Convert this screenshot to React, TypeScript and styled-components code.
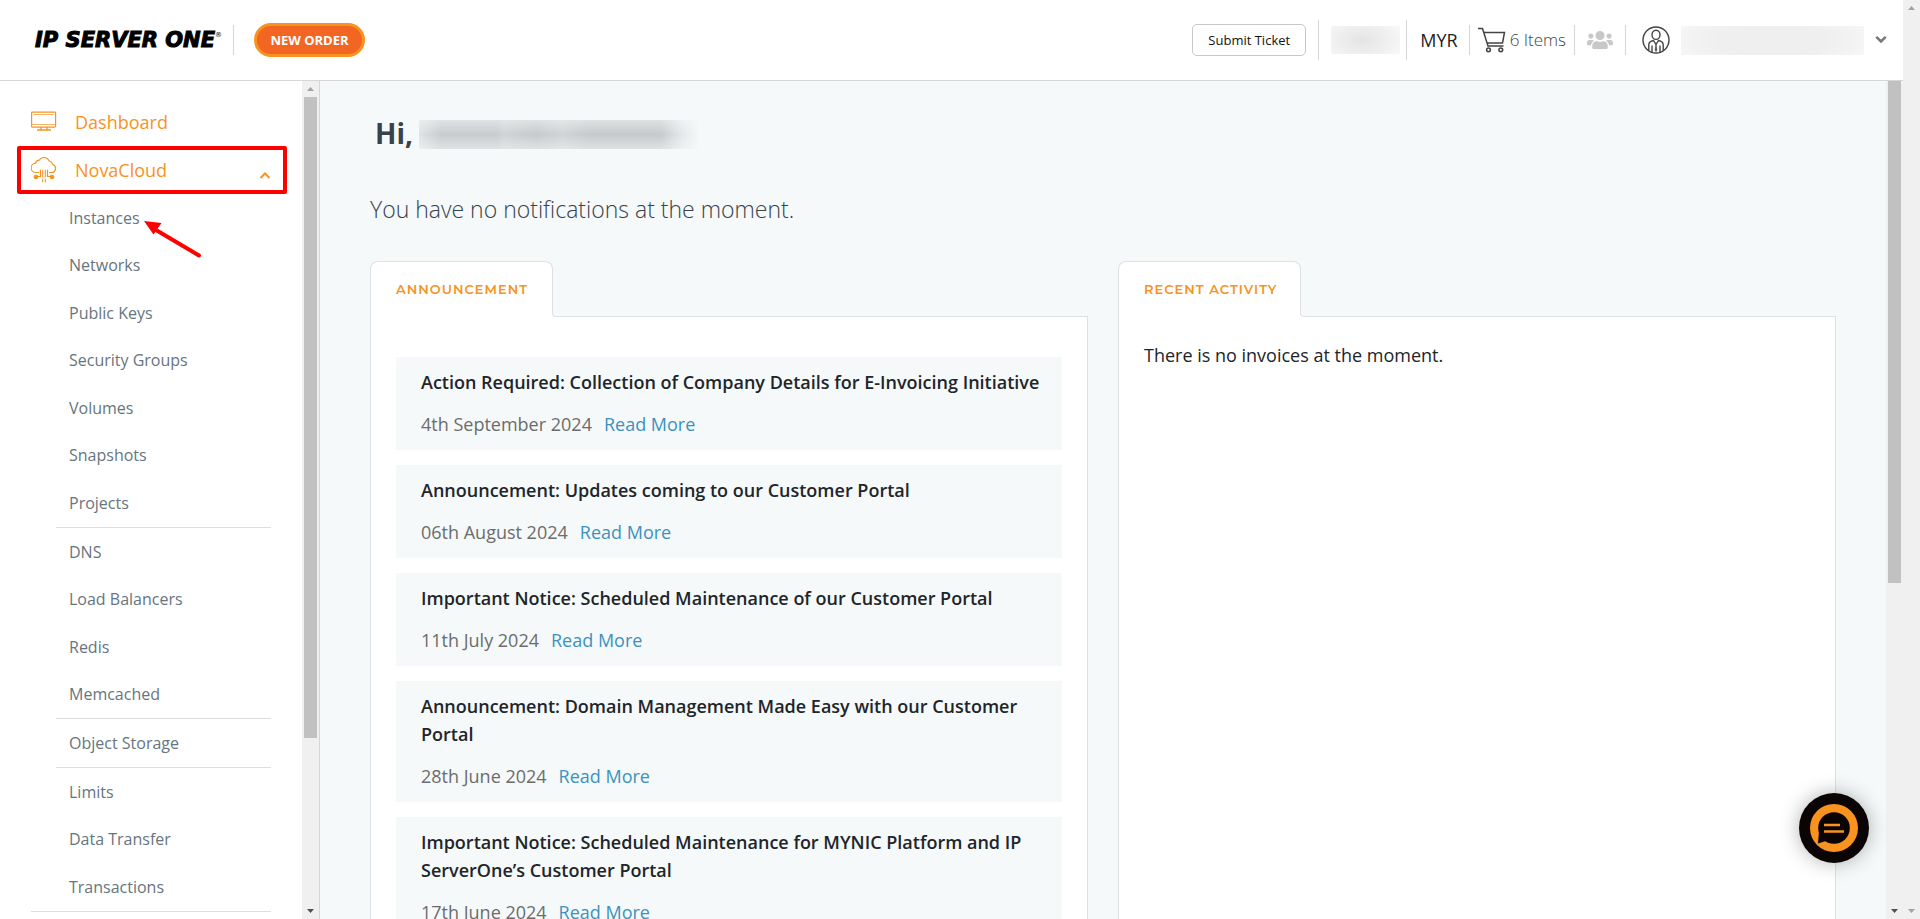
import React from 'react';
import styled, { createGlobalStyle, css } from 'styled-components';
import { FaUsers } from 'react-icons/fa';

const color = {
  line: '#d6d6d6',
  panelLine: '#dde1e6',
  orange: '#f7931e',
  pale: '#f5f9fa',
  muted: '#667580',
};

const GlobalStyle = createGlobalStyle`
  *, *::before, *::after { box-sizing: border-box; }
  body {
    margin: 0;
    background: #fff;
    color: #212529;
    font-family: "Open Sans", "Noto Sans", sans-serif;
    font-size: 18px;
    line-height: 28px;
  }
  ul { list-style: none; margin: 0; padding: 0; }
  a { text-decoration: none; color: inherit; }
  h1, h2, h3, p { margin: 0; }
  button { font-family: inherit; cursor: pointer; }
`;

const Window = styled.div`
  display: flex;
  height: 100vh;
  overflow: hidden;
`;

const Page = styled.div`
  flex: 1;
  min-width: 0;
  display: flex;
  flex-direction: column;
`;

const Body = styled.div`
  flex: 1;
  min-height: 0;
  display: flex;
`;

/* ---------- scroll rails ---------- */

const Rail = styled.div`
  flex: none;
  width: 17px;
  display: flex;
  flex-direction: column;
  align-items: center;
  background: #f0f0f0;
`;

const RailEnd = styled.span<{ $dim?: boolean }>`
  flex: none;
  height: 16px;
  display: flex;
  align-items: center;
  color: ${(p) => (p.$dim ? '#a3a3a3' : '#505050')};
`;

const RailTrack = styled.div`
  flex: 1;
  align-self: stretch;
  padding: 0 2px;
`;

const RailThumb = styled.div`
  background: #c1c1c1;
`;

type RailProps = { up?: boolean; thumb?: number; dimDown?: boolean };

function ScrollRail({ up = true, thumb = 0, dimDown }: RailProps) {
  return (
    <Rail aria-hidden="true">
      {up && (
        <RailEnd $dim>
          <svg width="7" height="4" viewBox="0 0 7 4"><path d="M0 4 3.500 0 7 4Z" fill="currentColor" /></svg>
        </RailEnd>
      )}
      <RailTrack>
        <RailThumb style={{ height: `${thumb}%` }} />
      </RailTrack>
      <RailEnd $dim={dimDown}>
        <svg width="7" height="4" viewBox="0 0 7 4"><path d="M0 0 3.500 4 7 0Z" fill="currentColor" /></svg>
      </RailEnd>
    </Rail>
  );
}

/* ---------- header ---------- */

const Header = styled.header`
  flex: none;
  height: 81px;
  padding: 0 16px 0 35px;
  display: flex;
  align-items: center;
  justify-content: space-between;
  border-bottom: 1px solid ${color.line};
`;

const HeaderSide = styled.div`
  display: flex;
  align-items: center;
`;

const Logo = styled.a`
  display: flex;
  width: 198px;
  color: #000;
  font: italic 700 21px/32px "DejaVu Sans", sans-serif;
  -webkit-text-stroke: 1px #000;
  white-space: nowrap;

  sup {
    font: 400 7px/8px "DejaVu Sans", sans-serif;
    -webkit-text-stroke: 0;
    margin-top: 7px;
  }
`;

const Separator = styled.span<{ $tall?: boolean }>`
  width: 1px;
  height: ${(p) => (p.$tall ? '40px' : '30px')};
  background: ${color.line};
`;

const OrderButton = styled.button`
  margin-left: 20px;
  width: 111px;
  height: 34px;
  padding: 0;
  border: 3px solid ${color.orange};
  border-radius: 17px;
  background: #f26522;
  color: #fff;
  font-size: 13px;
  font-weight: 700;
`;

const TicketButton = styled.button`
  margin-right: 12px;
  width: 114px;
  height: 32px;
  padding: 0;
  border: 1px solid #c8c8c8;
  border-radius: 5px;
  background: #fff;
  color: #111;
  font-size: 13px;
`;

const Redacted = styled.span<{ $kind: 'balance' | 'account' | 'greeting' }>`
  display: block;
  ${(p) =>
    p.$kind === 'balance' &&
    css`
      width: 69px;
      height: 28px;
      margin: 0 6px 0 12px;
      background: radial-gradient(ellipse 65% 90% at 45% 50%, #e4e4e4, #f8f8f8);
    `}
  ${(p) =>
    p.$kind === 'account' &&
    css`
      width: 183px;
      height: 29px;
      margin-left: 11px;
      background: radial-gradient(ellipse 60% 110% at 50% 50%, #efefef 50%, #f7f7f7);
    `}
  ${(p) =>
    p.$kind === 'greeting' &&
    css`
      width: 281px;
      height: 29px;
      margin-top: 7px;
      background:
        linear-gradient(#f5f9fa80, #f5f9fa00 50%, #f5f9fa80),
        linear-gradient(90deg, #dfe3e5, #c8ccce 8%, #c8ccce 28%, #cfd3d5 30%, #c6cacc 42%, #d0d4d6 51%, #c6cacc 60%, #c6cacc 86%, #e6eaec 94%, #f5f9fa);
    `}
`;

const Currency = styled.a`
  padding: 0 11px 0 13px;
  color: #222;
`;

const CartLink = styled.a`
  display: flex;
  align-items: center;
  gap: 4px;
  padding: 0 8px;
  color: #444;
  font-size: 17px;
  font-weight: 300;
`;

const IconButton = styled.button<{ $wide?: boolean }>`
  display: flex;
  padding: 0;
  margin: ${(p) => (p.$wide ? '0 0 0 16px' : '0 12px')};
  border: 0;
  background: none;
  color: ${(p) => (p.$wide ? '#444' : '#c8c8c8')};
`;

const MenuToggle = styled.button`
  display: flex;
  width: 12px;
  margin-left: 11px;
  padding: 0;
  border: 0;
  background: none;
  color: #767a7e;
`;

const CartIcon = () => (
  <svg width="28" height="26" viewBox="0 0 28 26" fill="none" stroke="#444" strokeWidth="1.500">
    <path d="M0 1.500h4.500L10 19h15.500M6 5.500h20.500l-2 10.500H9M4.500 2l1.500 3.500" />
    <circle cx="10.500" cy="22.800" r="1.900" />
    <circle cx="22.800" cy="22.800" r="1.900" />
  </svg>
);

const PersonIcon = () => (
  <svg width="28" height="28" viewBox="0 0 28 28" fill="none" stroke="#444" strokeWidth="1.400">
    <circle cx="14" cy="14" r="13" />
    <ellipse cx="14" cy="8.800" rx="4" ry="4.600" />
    <path d="M6.800 24.500V18.500Q7 15.500 11.500 14.500L14 18.500 16.500 14.500Q21 15.500 21.200 18.500V24.500M10 19.500v6.500M18 19.500v6.500" />
    <path d="M14 18.500l.9 5.500L14 25.500 13.100 24Z" fill="#444" strokeWidth=".6" />
  </svg>
);

/* ---------- sidebar ---------- */

const Sidebar = styled.aside`
  flex: none;
  width: 320px;
  display: flex;
  border-right: 1px solid ${color.line};
`;

const Nav = styled.nav`
  position: relative;
  flex: 1;
  padding: 17px 31px 0;
  overflow: hidden;
`;

const TopLink = styled.a`
  display: flex;
  align-items: center;
  height: 48px;
  color: ${color.orange};

  span {
    flex: 1;
    margin-left: 18px;
  }
`;

const SubGroup = styled.ul`
  margin-left: 25px;
  border-bottom: 1px solid #dcdfe1;

  &:last-child {
    margin-left: 0;
    padding-left: 25px;
  }
`;

const SubItem = styled.li`
  display: flex;
  align-items: center;
  height: 47px;
  padding: 0 0 1px 13px;
  color: ${color.muted};
  font-size: 16px;

  &:nth-child(odd) {
    height: 48px;
  }
`;

const Highlight = styled.div`
  position: absolute;
  left: 17px;
  top: 65px;
  width: 270px;
  height: 48px;
  border: 4px solid #f00;
  border-radius: 2px;
  pointer-events: none;
`;

const Pointer = styled.svg`
  position: absolute;
  left: 142px;
  top: 138px;
`;

const MonitorIcon = () => (
  <svg width="26" height="26" viewBox="0 0 26 26" fill="none" stroke={color.orange}>
    <rect x=".6" y="3.100" width="24" height="15" rx=".8" strokeWidth="1.200" />
    <path d="M2.500 5.500h20M1 15.500h24" strokeWidth=".7" />
    <path d="M10 18v3M16 18v3M6 21h14" strokeWidth="1.300" />
  </svg>
);

const CloudIcon = () => (
  <svg width="26" height="26" viewBox="0 0 26 26" fill="none" stroke={color.orange} strokeWidth="1.200" strokeLinecap="round">
    <path d="M7.500 15.500H5.200A4.600 4.600 0 0 1 4.500 6.200 4 4 0 0 1 8.200 3.200 5.700 5.700 0 0 1 18.300 4 4.300 4.300 0 0 1 21.600 7.200 4.300 4.300 0 0 1 21 15.500H18.500" />
    <path d="M9.500 13v6.500H7M16.500 13v6.500H19" />
    <path d="M11.700 13v12M14.300 13v12" strokeDasharray="7 2" strokeWidth="1" />
    <circle cx="5" cy="20" r="1.700" fill={color.orange} />
    <circle cx="21" cy="20" r="1.700" fill={color.orange} />
  </svg>
);

const subMenu = [
  ['Instances', 'Networks', 'Public Keys', 'Security Groups', 'Volumes', 'Snapshots', 'Projects'],
  ['DNS', 'Load Balancers', 'Redis', 'Memcached'],
  ['Object Storage'],
  ['Limits', 'Data Transfer', 'Transactions'],
];

/* ---------- main ---------- */

const Main = styled.main`
  flex: 1;
  min-width: 0;
  overflow: hidden;
  padding: 32px 50px 0;
  background: ${color.pale};
`;

const Greeting = styled.h1`
  display: flex;
  align-items: flex-start;
  gap: 6px;
  height: 42px;
  padding-left: 5px;
  color: #37424a;
  font-size: 28px;
  font-weight: 700;
  line-height: 40px;
`;

const Notice = styled.p`
  margin: 36px 0 33px;
  color: #37424a;
  font-size: 23px;
  font-weight: 300;
  line-height: 37px;
`;

const Columns = styled.div`
  display: grid;
  grid-template-columns: 1fr 1fr;
  gap: 30px;
`;

const Column = styled.section`
  display: flex;
  flex-direction: column;
  align-items: flex-start;
`;

const Tab = styled.h2`
  position: relative;
  width: 183px;
  height: 56px;
  margin-bottom: -1px;
  padding-left: 25px;
  border: 1px solid ${color.panelLine};
  border-bottom: 0;
  border-radius: 8px 8px 0 0;
  background: #fff;
  color: ${color.orange};
  font: 600 13px/55px Montserrat, Inter, sans-serif;
  letter-spacing: 1px;
  white-space: nowrap;

  &::after {
    content: '';
    position: absolute;
    left: 100%;
    bottom: 0;
    width: 5px;
    height: 5px;
    border: solid ${color.panelLine};
    border-width: 0 0 1px 1px;
    border-bottom-left-radius: 4px;
    background: ${color.pale};
    box-shadow: -1px 1px 0 #fff;
  }
`;

const Panel = styled.div<{ $list?: boolean }>`
  align-self: stretch;
  flex: 1;
  padding: ${(p) => (p.$list ? '40px 25px' : '24px 25px')};
  border: 1px solid ${color.panelLine};
  background: #fff;
`;

const NewsList = styled.ul`
  display: flex;
  flex-direction: column;
  gap: 15px;
`;

const NewsItem = styled.li`
  padding: 11px 16px 12px 25px;
  background: ${color.pale};
`;

const NewsTitle = styled.h3`
  margin-bottom: 14px;
  font-size: 18px;
  font-weight: 600;
  line-height: 28px;
`;

const NewsMeta = styled.p`
  display: flex;
  gap: 12px;
  color: #6c6c6c;

  a {
    color: #3c92be;
  }
`;

const ChatButton = styled.button`
  position: fixed;
  right: 51px;
  bottom: 56px;
  width: 70px;
  height: 70px;
  padding: 0;
  border: 0;
  border-radius: 50%;
  background: #0b0405;
  box-shadow: 0 0 20px rgba(0, 0, 0, 0.3);
`;

const news = [
  { title: 'Action Required: Collection of Company Details for E-Invoicing Initiative', date: '4th September 2024' },
  { title: 'Announcement: Updates coming to our Customer Portal', date: '06th August 2024' },
  { title: 'Important Notice: Scheduled Maintenance of our Customer Portal', date: '11th July 2024' },
  { title: 'Announcement: Domain Management Made Easy with our Customer Portal', date: '28th June 2024' },
  { title: 'Important Notice: Scheduled Maintenance for MYNIC Platform and IP ServerOne’s Customer Portal', date: '17th June 2024' },
];

export default function App() {
  return (
    <Window>
      <GlobalStyle />
      <Page>
        <Header>
          <HeaderSide>
            <Logo href="#">IP SERVER ONE<sup>®</sup></Logo>
            <Separator />
            <OrderButton>NEW ORDER</OrderButton>
          </HeaderSide>
          <HeaderSide>
            <TicketButton>Submit Ticket</TicketButton>
            <Separator $tall />
            <Redacted $kind="balance" />
            <Separator $tall />
            <Currency href="#">MYR</Currency>
            <Separator />
            <CartLink href="#"><CartIcon />6 Items</CartLink>
            <Separator />
            <IconButton aria-label="Contacts"><FaUsers size={26} /></IconButton>
            <Separator />
            <IconButton $wide aria-label="Account"><PersonIcon /></IconButton>
            <Redacted $kind="account" />
            <MenuToggle aria-label="Account menu">
              <svg width="12" height="10" viewBox="0 0 12 10" fill="none" stroke="currentColor" strokeWidth="2.600">
                <path d="M1.300 1.800 6 6.500l4.700-4.700" />
              </svg>
            </MenuToggle>
          </HeaderSide>
        </Header>
        <Body>
          <Sidebar>
            <Nav>
              <TopLink href="#"><MonitorIcon /><span>Dashboard</span></TopLink>
              <TopLink href="#">
                <CloudIcon /><span>NovaCloud</span>
                <svg width="12" height="20" viewBox="0 0 12 20" fill="none" stroke={color.orange} strokeWidth="2">
                  <path d="M1.500 18 6 13.500l4.500 4.500" />
                </svg>
              </TopLink>
              <div>
                {subMenu.map((group) => (
                  <SubGroup key={group[0]}>
                    {group.map((name) => (
                      <SubItem key={name}><a href="#">{name}</a></SubItem>
                    ))}
                  </SubGroup>
                ))}
              </div>
              <Highlight />
              <Pointer width="62" height="42" viewBox="0 0 62 42">
                <path d="M57 36.500 14 11" stroke="#f00" strokeWidth="4" strokeLinecap="round" />
                <path d="M2 2 19.500 4 11.500 15.500Z" fill="#f00" />
              </Pointer>
            </Nav>
            <ScrollRail thumb={79.5} />
          </Sidebar>
          <Main>
            <Greeting>Hi, <Redacted $kind="greeting" /></Greeting>
            <Notice>You have no notifications at the moment.</Notice>
            <Columns>
              <Column>
                <Tab>ANNOUNCEMENT</Tab>
                <Panel $list>
                  <NewsList>
                    {news.map((n) => (
                      <NewsItem key={n.title}>
                        <NewsTitle>{n.title}</NewsTitle>
                        <NewsMeta>{n.date} <a href="#">Read More</a></NewsMeta>
                      </NewsItem>
                    ))}
                  </NewsList>
                </Panel>
              </Column>
              <Column>
                <Tab>RECENT ACTIVITY</Tab>
                <Panel>There is no invoices at the moment.</Panel>
              </Column>
            </Columns>
          </Main>
          <ScrollRail up={false} thumb={61.1} />
        </Body>
      </Page>
      <ScrollRail dimDown />
      <ChatButton aria-label="Chat">
        <svg width="70" height="70" viewBox="0 0 70 70">
          <circle cx="35" cy="35" r="24" fill={color.orange} />
          <circle cx="35" cy="35" r="15.800" fill="#0b0405" />
          <path d="M20 38 19 50.500 30 47Z" fill="#0b0405" />
          <path d="M25 32h16M25 38.500h20" stroke={color.orange} strokeWidth="2.600" />
        </svg>
      </ChatButton>
    </Window>
  );
}
